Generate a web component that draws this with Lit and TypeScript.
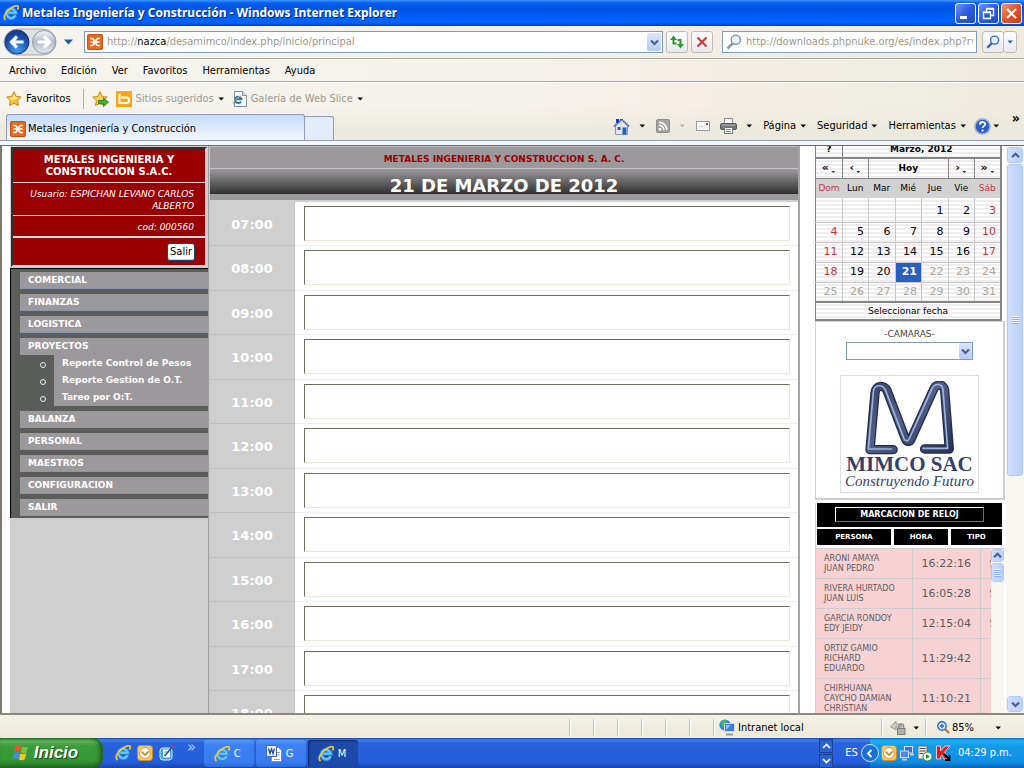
import { LitElement, html, svg, css } from "lit";
import { customElement } from "lit/decorators.js";
import { classMap } from "lit/directives/class-map.js";

const ieLogo = (size: number) => html`
  <svg class="ico" width=${size} height=${size} viewBox="0 0 16 16" aria-hidden="true">
    <path d="M12.600 10.400a4.800 4.800 0 1 1 .3-2.600H5.400" fill="none" stroke="#2f8fe0" stroke-width="3.600"/>
    <path d="M12.400 10.200a4.600 4.600 0 1 1 .3-2.500H5.400" fill="none" stroke="#6cc6fa" stroke-width="2"/>
    <path d="M2.500 15C-.8 12.600 3 6.400 7.600 3.200 11 .8 14.800-.2 15.300 1.600c.3 1-.3 2.200-.9 3" fill="none" stroke="#f9c62c" stroke-width="1.700"/>
  </svg>`;

const xampp = html`
  <svg class="ico" width="16" height="16" viewBox="0 0 16 16" aria-hidden="true">
    <rect width="16" height="16" rx="2" fill="#e8691d"/>
    <rect x=".5" y=".5" width="15" height="15" rx="2" fill="none" stroke="#c9530f"/>
    <path d="M3 4.500h2.500L7 6v4l-1.500 1.500H3M3.500 8H6M13 4.500h-2.500L9 6v4l1.500 1.500H13M12.500 8H10M6.500 8h3" fill="none" stroke="#fff" stroke-width="1.700"/>
  </svg>`;

const chevron = (up = false) => html`
  <svg class="ico" width="9" height="7" viewBox="0 0 9 7" aria-hidden="true">
    <path d=${up ? "M1 5.200 4.500 1.700 8 5.200" : "M1 1.500 4.500 5 8 1.500"} fill="none" stroke="#4d6185" stroke-width="2.200"/>
  </svg>`;

const tri = (color = "#000") => html`
  <svg class="ico" width="7" height="4" viewBox="0 0 7 4" aria-hidden="true"><path d="M.5.500h5.500L3.250 3.500z" fill=${color}/></svg>`;

const starPath = "M8 .8l2.200 4.600 5 .7-3.700 3.500.9 5L8 12.200l-4.500 2.400.9-5L.8 6.100l5-.7z";

const star = html`
  <svg class="ico" width="16" height="16" viewBox="0 0 16 16" aria-hidden="true">
    <path d=${starPath} fill="#fcc430" stroke="#c8861a"/>
    <path d="M8 3l1.300 3.200 3.500.4-3 1.500L5 9l-2-2.300 3.600-.5z" fill="#ffec8c"/>
  </svg>`;

const starAdd = html`
  <svg class="ico" width="17" height="16" viewBox="0 0 17 16" aria-hidden="true">
    <path d=${starPath} fill="#fcd049" stroke="#c8861a"/>
    <path d="M6.500 9.500h5V7l5 4.300-5 4.200v-2.700h-5z" fill="#3fb43a" stroke="#1d7a20" stroke-width=".8"/>
  </svg>`;

const bing = html`
  <svg class="ico" width="16" height="16" viewBox="0 0 16 16" aria-hidden="true">
    <rect width="16" height="16" fill="#fba51a"/>
    <path d="M3.500 3v9h7c3.400 0 3.400-5.500 0-5.500H5" fill="none" stroke="#fff" stroke-width="2"/>
  </svg>`;

const iePage = html`
  <svg class="ico" width="15" height="16" viewBox="0 0 15 16" aria-hidden="true">
    <path d="M2.500.5h8l4 4v11h-12z" fill="#fff" stroke="#7d8da5"/>
    <path d="M10.500.5v4h4" fill="#dde5f0" stroke="#7d8da5"/>
    <path d="M9 10.500a3.200 3.200 0 1 1 .4-2.200H4" fill="none" stroke="#1f7bd6" stroke-width="2"/>
    <path d="M1.500 13.500C0 11 6 5 9.500 5" fill="none" stroke="#f0b020"/>
  </svg>`;

const magnifier = (c: string, w = 16) => html`
  <svg class="ico" width=${w} height=${w} viewBox="0 0 16 16" aria-hidden="true">
    <path d="M1.500 14.500 7 9" stroke=${c} stroke-width="2.600"/>
    <circle cx="9.800" cy="5.800" r="4.600" fill="#eaf4fd" stroke=${c} stroke-width="1.500"/>
  </svg>`;

const home = html`
  <svg class="ico" width="17" height="17" viewBox="0 0 17 17" aria-hidden="true">
    <path d="M3 1h3v4H3z" fill="#1b35c4"/>
    <path d="M2.500 8 8.500 2l6 6v8.500h-12z" fill="#e2e7f0" stroke="#8a96aa"/>
    <path d="M.8 8.500 8.500 1l7.700 7.500" fill="none" stroke="#2743b8" stroke-width="1.500" stroke-dasharray="1.500 .7"/>
    <rect x="9.500" y="9.500" width="4" height="7" fill="#1e62c0"/>
    <rect x="4.500" y="9" width="3" height="3" fill="#556"/>
  </svg>`;

const rss = html`
  <svg class="ico" width="14" height="14" viewBox="0 0 14 14" aria-hidden="true">
    <rect width="14" height="14" rx="2" fill="#a5a5a2"/>
    <rect x=".5" y=".5" width="13" height="13" rx="2" fill="none" stroke="#8b8b88"/>
    <circle cx="4" cy="10.200" r="1.300" fill="#fff"/>
    <path d="M3 6.200a4.800 4.800 0 0 1 4.800 4.800M3 3.200A7.800 7.800 0 0 1 10.800 11" fill="none" stroke="#fff" stroke-width="1.400"/>
  </svg>`;

const mail = html`
  <svg class="ico" width="14" height="10" viewBox="0 0 14 10" aria-hidden="true">
    <rect x=".5" y=".5" width="13" height="9" fill="#f7f7fa" stroke="#9a9aa6"/>
    <path d="M3 5.500h4" stroke="#c8c8d2"/><rect x="10" y="2" width="2" height="2" fill="#e23c30"/>
  </svg>`;

const printer = html`
  <svg class="ico" width="17" height="16" viewBox="0 0 17 16" aria-hidden="true">
    <path d="M4.500.5h8v6h-8z" fill="#fff" stroke="#8c8c8c"/>
    <rect x=".5" y="5.500" width="16" height="6" rx="1.500" fill="#77797d" stroke="#55575b"/>
    <path d="M1.500 7h14" stroke="#b9bbbf"/>
    <path d="M4.500 9.500h8v6h-8z" fill="#fff" stroke="#6f7377"/>
    <path d="M6 11.500h5M6 13.500h5" stroke="#4a9bd8"/>
  </svg>`;

const help = html`
  <svg class="ico" width="17" height="17" viewBox="0 0 17 17" aria-hidden="true">
    <circle cx="8.500" cy="8.500" r="7.600" fill="#2d5fc4" stroke="#aab4c8" stroke-width="1.600"/>
    <path d="M5.800 6.600c.2-3.600 5.600-3.200 5.300-.2-.2 1.500-2.500 1.700-2.500 3.700" fill="none" stroke="#fff" stroke-width="1.800"/>
    <circle cx="8.600" cy="12.600" r="1.100" fill="#fff"/>
  </svg>`;

const navArrows = html`
  <svg class="nav-arrows" width="54" height="28" viewBox="0 0 54 28" aria-hidden="true">
    <defs>
      <radialGradient id="bk" cx=".5" cy=".85" r=".9"><stop offset="0" stop-color="#3d9cf0"/><stop offset=".6" stop-color="#1c4fae"/><stop offset="1" stop-color="#10357c"/></radialGradient>
      <linearGradient id="fw" x2="0" y2="1"><stop offset="0" stop-color="#f4f5f8"/><stop offset=".5" stop-color="#b3bcca"/><stop offset="1" stop-color="#e6e9ef"/></linearGradient>
    </defs>
    <path d="M14 1h26a13 13 0 0 1 0 26H14A13 13 0 0 1 14 1z" fill="#dfe0e2" stroke="#a9abb0"/>
    <circle cx="14" cy="14" r="12" fill="url(#bk)" stroke="#1b3568"/>
    <circle cx="41" cy="14" r="11.500" fill="url(#fw)" stroke="#8f98a8"/>
    <path d="M20.500 14H9M14 8.500 8.500 14l5.500 5.500" fill="none" stroke="#fff" stroke-width="3.200"/>
    <path d="M34.500 14H46M41 8.500l5.500 5.500-5.500 5.500" fill="none" stroke="#fff" stroke-width="3.200"/>
  </svg>`;

const refresh = html`
  <svg class="ico" width="16" height="16" viewBox="0 0 16 16" aria-hidden="true">
    <path d="M4.500 5v4.500h3M11.500 10.500V6h-3" fill="none" stroke="#2b9a2b" stroke-width="2"/>
    <path d="M1 6l3.500-4.500L8 6zM8 10h7l-3.500 4.500z" fill="#2b9a2b"/>
  </svg>`;

const stop = html`
  <svg class="ico" width="12" height="12" viewBox="0 0 12 12" aria-hidden="true">
    <path d="M1.500 1.500l9 9M10.500 1.500l-9 9" stroke="#cc3a3a" stroke-width="2.200"/></svg>`;

const flag = html`
  <svg class="ico" width="20" height="18" viewBox="0 0 20 18" aria-hidden="true">
    <path d="M4.500 2C6.500.8 8.500 1 10 2L8.600 8C7 7 5 7 3.200 8z" fill="#f0552a"/>
    <path d="M11 2.500c2 1 4 1 6-.2L15.500 8.300c-2 1.200-4 1-6 .2z" fill="#7cc242"/>
    <path d="M3 9c2-1.200 4-1 5.500 0L7 15.200C5.500 14 3.500 14 1.500 15z" fill="#3f8df0"/>
    <path d="M9.300 9.500c2 1 4 1 6-.2l-1.500 6c-2 1.200-4 1-6 .2z" fill="#fcc52c"/>
  </svg>`;

const outlook = html`
  <svg class="ico" width="16" height="16" viewBox="0 0 16 16" aria-hidden="true">
    <rect x=".5" y=".5" width="15" height="15" rx="3" fill="#f6c667" stroke="#c98c28"/>
    <circle cx="8" cy="8" r="5.500" fill="#fff8e6" stroke="#d99c3a"/>
    <path d="M4.500 6.500 8 10l4-3.800" fill="none" stroke="#b0792a" stroke-width="1.400"/>
  </svg>`;

const desktop = html`
  <svg class="ico" width="16" height="16" viewBox="0 0 16 16" aria-hidden="true">
    <rect x="1" y="3" width="12" height="12" rx="3" fill="#3da0ea" stroke="#d6ecff"/>
    <rect x="4" y="4.500" width="7" height="8" fill="#fff"/>
    <path d="M5.500 11 13 2.500" stroke="#1c4ea0" stroke-width="1.600"/>
    <path d="M12.500 1l2.500 2" stroke="#d03a2a" stroke-width="2"/>
    <path d="M5.500 7h3" stroke="#4a7fc8"/>
  </svg>`;

const word = html`
  <svg class="ico" width="16" height="17" viewBox="0 0 16 17" aria-hidden="true">
    <path d="M5.500 2.500h7l3 3v11h-10z" fill="#fff" stroke="#7b8fb5"/>
    <path d="M8 14.500h6M11 7.500h3M11 10h3" stroke="#8aa4d4"/>
    <rect x=".5" y=".5" width="10" height="11" fill="#e8effb" stroke="#4a68a8"/>
    <path d="M2.500 3.500l1.500 5 1.500-4.500 1.500 4.500 1.500-5" fill="none" stroke="#1f4fa8" stroke-width="1.300"/>
  </svg>`;

const globePc = html`
  <svg class="ico" width="16" height="17" viewBox="0 0 16 17" aria-hidden="true">
    <circle cx="6" cy="6" r="5.600" fill="#2f87d8"/><path d="M2 3c2-2 4-2 6-1L6 6 3 8zM5 9l3 0 0 2z" fill="#4cbf3c"/>
    <rect x="5.500" y="4.500" width="10" height="8" rx="1" fill="#3c7be0" stroke="#d2dcea"/>
    <path d="M7 11V6h5z" fill="#8cc6f8"/><path d="M7 15.500h7" stroke="#8d97a8" stroke-width="2"/>
  </svg>`;

const protectedMode = html`
  <svg class="ico" width="16" height="15" viewBox="0 0 16 15" aria-hidden="true">
    <path d="M.5 7 6 1v3c4-.5 6 1 6 3H6v3z" fill="#c9c9c4" stroke="#9a9a94"/>
    <path d="M9 8.500V6.300a2.300 2.300 0 0 1 4.600 0v2.200" fill="none" stroke="#8c8c8c" stroke-width="1.400"/>
    <rect x="7.500" y="8.500" width="7.500" height="6" fill="#b0b0ac" stroke="#7e7e7c"/>
  </svg>`;

const zoomIn = html`
  <svg class="ico" width="13" height="13" viewBox="0 0 13 13" aria-hidden="true">
    <path d="M8 8l4 4" stroke="#b3793a" stroke-width="2.200"/>
    <circle cx="5" cy="5" r="4.200" fill="#dff0ff" stroke="#2a68c8" stroke-width="1.400"/>
    <path d="M2.800 5h4.400M5 2.800v4.400" stroke="#2a68c8" stroke-width="1.400"/>
  </svg>`;

const network = html`
  <svg class="ico" width="16" height="16" viewBox="0 0 16 16" aria-hidden="true">
    <rect x="5.500" y="1.500" width="8" height="6.500" fill="#3f6cd8" stroke="#cfe0f5"/>
    <rect x="1.500" y="6" width="8" height="6.500" fill="#4f86e8" stroke="#cfe0f5"/>
    <path d="M3 14.500h5M11 9.500h4" stroke="#c0cbdc" stroke-width="2"/>
  </svg>`;

const server = html`
  <svg class="ico" width="16" height="17" viewBox="0 0 16 17" aria-hidden="true">
    <rect x="1" y="1" width="9" height="13" fill="#e8e6da" stroke="#77756a"/>
    <path d="M2.500 3.500h6M2.500 6h6M2.500 8.500h4" stroke="#555"/>
    <circle cx="10.500" cy="11.500" r="4.500" fill="#fff" stroke="#2d8c2d"/>
    <path d="M9 9v5l4-2.500z" fill="#1f9a1f"/>
  </svg>`;

const kaspersky = html`
  <svg class="ico" width="16" height="16" viewBox="0 0 16 16" aria-hidden="true">
    <path d="M1.500 1h4v5L10 1h5L9.500 7l4 7H9L7 10l-1.500 1.500V14h-4z" fill="#e31b1b" stroke="#fff" stroke-width=".7"/>
    <path d="M9 9l5.500 5.500M14.500 10v5H10" fill="none" stroke="#000" stroke-width="1.800"/>
  </svg>`;

const pipe = "M340 388H271L286 218C288 194 314 194 322 212L377 356C381 366 390 366 394 356L461 208C469 190 492 192 494 210L508 386H434";
const mimcoLogo = html`
  <svg class="m-logo" width="91" height="74" viewBox="253 183 272 221" preserveAspectRatio="none" aria-hidden="true">
    <defs>
      <linearGradient id="steel" x2="1" y2="1"><stop offset="0" stop-color="#39456b"/><stop offset=".45" stop-color="#52618c"/><stop offset="1" stop-color="#2a3458"/></linearGradient>
    </defs>
    ${svg`<path d=${pipe} fill="none" stroke="#262c42" stroke-width="28" stroke-linejoin="round" stroke-linecap="round"/>
    <path d=${pipe} fill="none" stroke="url(#steel)" stroke-width="20" stroke-linejoin="round" stroke-linecap="round"/>
    <path d=${pipe} transform="translate(-5 -2)" fill="none" stroke="#9fb4dc" stroke-width="5" stroke-linejoin="round" stroke-linecap="round"/>`}
  </svg>`;

const HOURS = Array.from({ length: 12 }, (_, i) => `${String(i + 7).padStart(2, "0")}:00`);
const MENU: { name: string; items?: string[] }[] = [
  { name: "COMERCIAL" }, { name: "FINANZAS" }, { name: "LOGISTICA" },
  { name: "PROYECTOS", items: ["Reporte Control de Pesos", "Reporte Gestion de O.T.", "Tareo por O:T."] },
  { name: "BALANZA" }, { name: "PERSONAL" }, { name: "MAESTROS" }, { name: "CONFIGURACION" }, { name: "SALIR" },
];
const DAYS = ["Dom", "Lun", "Mar", "Mié", "Jue", "Vie", "Sáb"];
const FIRST_WEEKDAY = 4;
const TODAY = 21;
const CLOCK = [
  { who: ["ARONI AMAYA", "JUAN PEDRO"], at: "16:22:16", kind: "S" },
  { who: ["RIVERA HURTADO", "JUAN LUIS"], at: "16:05:28", kind: "S" },
  { who: ["GARCIA RONDOY", "EDY JEIDY"], at: "12:15:04", kind: "S" },
  { who: ["ORTIZ GAMIO", "RICHARD", "EDUARDO"], at: "11:29:42", kind: "" },
  { who: ["CHIRHUANA", "CAYCHO DAMIAN", "CHRISTIAN"], at: "11:10:21", kind: "" },
];

@customElement("app-root")
export class AppRoot extends LitElement {
  static styles = css`
    :host {
      display: flex; flex-direction: column; height: 100vh; overflow: hidden;
      font: 11px/14px "DejaVu Sans Condensed", "DejaVu Sans", sans-serif; color: #000; background: #fff;
    }
    *, *::before { box-sizing: border-box; }
    button, input, select { font: inherit; color: inherit; margin: 0; padding: 0; border: 0; background: none; border-radius: 0; outline: 0; }
    button { display: flex; align-items: center; justify-content: center; white-space: nowrap; }
    a { color: inherit; text-decoration: none; white-space: nowrap; }
    ul { list-style: none; margin: 0; padding: 0; }
    .ico { display: block; flex: none; }
    .grow { flex: 1; min-width: 0; }

    .title {
      flex: none; height: 26px; display: flex; align-items: center; gap: 3px; padding: 0 2px 0 3px; color: #fff;
      background: linear-gradient(#3d95ff 0, #0a5ef0 3px, #0054e3 8px, #0058ee 14px, #0066ff 21px, #0060f8 23px, #003dc0 26px);
    }
    .title h1 { margin: 0; font: bold 12px/16px "Noto Sans", "Open Sans", sans-serif; text-shadow: 1px 1px 0 #0a2a80; white-space: nowrap; overflow: hidden; }
    .win { width: 21px; height: 21px; flex: none; border: 1px solid #fff; border-radius: 3px; background: linear-gradient(135deg, #6f97f0, #2a5bdc 50%, #1e4bc8); }
    .win.close { background: linear-gradient(135deg, #f0977c, #e0532c 50%, #c83c14); }
    .wins { display: flex; gap: 2px; }

    .chrome { flex: none; background: linear-gradient(90deg, #f6f4ee 0, #f5f2ec 50%, #f5ede6 68%, #f0eee2 85%, #efebde 100%); }
    .nav { height: 33px; display: flex; align-items: center; gap: 3px; padding: 0 7px 0 3px; border-bottom: 1px solid #aca899; }
    .nav-arrows { display: block; flex: none; }
    .hist { width: 16px; height: 20px; }
    .addr { flex: 1; min-width: 0; height: 22px; margin-left: 5px; display: flex; align-items: center; gap: 4px; padding: 0 1px; border: 1px solid #7f9db9; background: #fff; color: #9a978a; }
    .addr .dark { color: #000; }
    .addr .ico:first-child { margin-left: 1px; }
    .drop { width: 14px; height: 18px; flex: none; border-radius: 2px; background: linear-gradient(#dbe6fe, #b4cafa); }
    .tool { width: 22px; height: 22px; flex: none; border: 1px solid #bcbcb6; border-radius: 3px; background: linear-gradient(#fff, #e9e8ec); }
    .find { width: 255px; flex: none; height: 22px; margin-left: 6px; display: flex; align-items: center; gap: 4px; padding: 0 3px; border: 1px solid #7f9db9; background: #fff; color: #9a978a; }
    .find input { flex: 1; min-width: 0; }
    .go { display: flex; margin-left: 2px; }
    .go .tool + .tool { width: 14px; margin-left: -1px; }
    .menu { height: 23px; display: flex; align-items: center; gap: 15px; padding: 0 9px; border-bottom: 1px solid #aca899; border-top: 1px solid #fff; }
    .favs { height: 26px; display: flex; align-items: center; gap: 7px; padding: 6px 6px 0; border-top: 1px solid #fff; color: #9c998c; }
    .favs a { display: flex; align-items: center; gap: 4px; }
    .favs .main { color: #000; padding-right: 12px; margin-right: 1px; border-right: 1px solid #b5b2a5; height: 20px; }
    .tabs { height: 33px; display: flex; align-items: flex-end; padding-left: 6px; border-bottom: 1px solid #8f9bb8; background: linear-gradient(rgba(232, 234, 216, 0), #eceadc 70%); }
    .tab { width: 299px; height: 26px; display: flex; align-items: center; gap: 2px; padding: 2px 3px 0; border: 1px solid #8f9bb8; border-bottom: 0; border-radius: 3px 3px 0 0; background: linear-gradient(#c3dbfc, #f3f6fe); }
    .newtab { width: 29px; height: 24px; border: 1px solid #8f9bb8; border-left: 0; border-bottom: 0; border-radius: 0 3px 0 0; background: #e4ebfb; }
    .cmds { margin-left: auto; display: flex; align-items: center; gap: 10px; height: 28px; padding: 0 4px 0 0; }
    .cmds button { gap: 4px; }
    .cmds .pair { gap: 9px; }
    .cmds .tight { gap: 2px; margin-left: -3px; }
    .cmds .more { align-self: flex-start; font: bold 14px/12px "DejaVu Sans Condensed", "DejaVu Sans", sans-serif; margin-left: 2px; }
    .strip { height: 5px; background: #f5f7ff; border-bottom: 1px solid #6f6a60; }

    .page { flex: 1; min-height: 0; display: flex; border-left: 2px solid #7d786c; padding-left: 8px; overflow: hidden; background: #fff; font-family: "DejaVu Sans", sans-serif; }
    .side { width: 199px; flex: none; background: #cfcfcf; border-right: 1px solid #a0a0a0; overflow: hidden; }
    .user { margin: 1px; border: 2px solid #303030; border-color: #303030 #d0d0d0 #d0d0d0 #303030; background: #990000; color: #fff; font-size: 9px; line-height: 12px; }
    .user > * { margin: 0; border: 0 solid #d8d8d8; border-bottom-width: 1px; }
    .user h2 { font-size: 10px; line-height: 12px; text-align: center; padding: 5px 20px 4px; }
    .user p { font-style: italic; text-align: right; padding: 5px 11px 3px; }
    .user p + p { border-bottom-width: 2px; }
    .user div { display: flex; justify-content: flex-end; padding: 5px 10px 4px; border: 0; }
    .exit { height: 18px; width: 28px; color: #000; background: #fff; border: 1px solid #1a4275; border-radius: 3px; box-shadow: inset 0 -1px #d6d0c5; font: 11px/12px "DejaVu Sans Condensed", "DejaVu Sans", sans-serif; }
    .sections { background: #5b5d5a; border-left: 1px solid #000; border-top: 1px solid #000; padding: 3px 0 2px 9px; color: #fff; font-size: 9px; font-weight: bold; display: flex; flex-direction: column; gap: 5px; }
    .sections a { display: block; line-height: 17px; padding-left: 8px; background: #9c999c; }
    .sections .last { border-bottom: 1px solid #8a97ab; line-height: 16px; }
    .sub a { margin-left: 34px; }
    .sub li { position: relative; }
    .sub li::before { content: ""; position: absolute; left: 20px; top: 7px; width: 6px; height: 6px; border: 1px solid #e4f0f8; border-radius: 50%; }

    .agenda { flex: 1; min-width: 0; overflow: hidden; border-right: 2px solid #a5a5a5; border-left: 1px solid #c8c8c8; }
    .org { height: 23px; display: flex; align-items: center; justify-content: center; padding-top: 2px; background: #9c999c; border-top: 1px solid #c0c0c0; border-bottom: 1px solid #c4c4c4; color: #990000; font: bold 9px/12px "DejaVu Sans", sans-serif; }
    .date { margin: 0; height: 33px; text-align: center; color: #fff; font: bold 18px/33px "DejaVu Sans", sans-serif; background: linear-gradient(#9c999c 0, #8c8a8c 4px, #303030 25px, #9c999c 25px, #9c999c 31px, #d0d0d0 31px); }
    .slot { display: grid; grid-template-columns: 85px 1fr; height: 44px; }
    .slot:nth-child(even) { height: 45px; }
    .slot label { display: flex; align-items: center; justify-content: center; padding-top: 2px; background: #cfcfcf; color: #fff; font: bold 13px/16px "DejaVu Sans", sans-serif; border-bottom: 1px solid #bfbfbf; border-right: 1px solid #c6c6c6; }
    .cell { padding: 4px 8px 0 9px; border-bottom: 1px solid #f0eeee; }
    .cell input { display: block; width: 100%; height: 35px; border: 1px solid #ece9d8; border-top-color: #716c62; border-left-color: #716c62; background: #fff; }

    .right { width: 206px; flex: none; padding-left: 15px; overflow: hidden; }
    table { border-collapse: collapse; table-layout: fixed; width: 100%; }
    td, th { padding: 0; font-weight: normal; }
    .cal { width: 187px; border: 2px solid #868686; border-top: 0; border-left-width: 1px; font-size: 11px; line-height: 14px; background: repeating-linear-gradient(#fff 0, #fff 2px, #f0edf0 2px, #f0edf0 4px); }
    .cal .t { font-size: 9px; font-weight: bold; height: 11px; line-height: 7px; border-bottom: 2px solid #868686; border-right: 1px solid #868686; text-align: center; padding-bottom: 4px; }
    .cal .n { font-size: 9px; font-weight: bold; height: 20px; border: 1px solid #868686; border-width: 0 1px 1px 0; text-align: center; }
    .cal .n button { width: 100%; font-size: 11px; font-weight: bold; line-height: 16px; gap: 2px; }
    .cal .n button .ico { margin-top: 8px; width: 5px; }
    .cal .h { font-size: 9px; height: 20px; text-align: center; background: #d2d2d2; }
    .cal .d { height: 20px; text-align: right; padding-right: 4px; border-right: 1px solid #c8c8c8; border-bottom: 1px solid #c8c8c8; }
    .cal .first .d { height: 24px; padding-top: 2px; }
    .cal .red { color: #cc3340; }
    .cal .off { color: #aaa79c; }
    .cal .now { background: #2a5fc0; color: #fff; font-weight: bold; }
    .cal .f { font-size: 9px; height: 18px; text-align: center; border-top: 2px solid #868686; }
    .box { width: 190px; border: 2px solid #cfcfcf; border-width: 1px 2px 2px 1px; display: flex; flex-direction: column; align-items: center; height: 179px; padding-top: 6px; }
    .box label { font-size: 9px; line-height: 13px; color: #444; }
    .combo { position: relative; width: 127px; height: 18px; margin-top: 1px; }
    .combo select { appearance: none; width: 100%; height: 100%; border: 1px solid #7f9db9; background: #fff; }
    .combo .drop { position: absolute; right: 1px; top: 1px; width: 13px; height: 16px; display: flex; align-items: center; justify-content: center; pointer-events: none; }
    .logo { width: 139px; margin-top: 15px; height: 118px; border: 1px solid #e0dcdc; display: flex; flex-direction: column; align-items: center; padding-top: 5px; color: #343f6c; white-space: nowrap; }
    .m-logo { display: block; flex: none; }
    .logo b { font: bold 21px/18px "Liberation Serif", serif; }
    .logo i { font: italic 15px/17px "Liberation Serif", serif; }
    .clock { width: 189px; margin-top: 3px; border-left: 1px solid #cfcfcf; }
    .clock h3 { margin: 0 2px 2px 1px; height: 24px; padding: 4px 18px; background: #000; color: #fff; font-size: 8px; }
    .clock h3 span { display: block; line-height: 13px; border: 1px solid #fff; border-color: #fff #716c62 #716c62 #fff; text-align: center; }
    .heads { display: grid; grid-template-columns: 74px 54px 1fr; gap: 3px; padding: 0 2px 3px 1px; color: #fff; font: bold 7px/16px "DejaVu Sans", sans-serif; text-align: center; }
    .heads span { background: #000; }
    .list { display: flex; height: 168px; overflow: hidden; border-top: 1px solid #cfcfcf; }
    .clip { flex: 1; min-width: 0; overflow: hidden; }
    .clip table { width: 212px; background: #f6d2d4; color: #5e5a5c; font-size: 8px; line-height: 10px; }
    .clip td { padding: 5px 0 4px 8px; height: 29px; border-right: 1px solid #cfcacb; border-bottom: 1px solid #cfcacb; }
    .clip .at { font-size: 11px; padding: 0 0 0 9px; }
    .clip .kind { font-size: 11px; padding: 0 0 0 9px; }

    .bar { width: 18px; flex: none; display: flex; flex-direction: column; gap: 1px; padding: 1px; background: #f8f6f0; }
    .bar button, .bar .thumb { border: 1px solid #fff; outline: 1px solid #b4c8f4; outline-offset: -1px; border-radius: 3px; background: linear-gradient(90deg, #cfdefe, #b9cffb); }
    .bar button { height: 16px; flex: none; width: 100%; }
    .thumb { display: flex; align-items: center; justify-content: center; }
    .big { height: 312px; flex: none; }
    .mini { width: 13px; padding: 0; }
    .mini button { height: 13px; }
    .mini .thumb { height: 19px; flex: none; }
    .grip { width: 7px; height: 8px; background: repeating-linear-gradient(#eef4fe 0, #eef4fe 1px, #8cb0f8 1px, #8cb0f8 2px); }

    .status { flex: none; height: 25px; display: flex; align-items: center; padding: 2px 0 0; border-top: 2px solid #8d887a; background: linear-gradient(#f4f2e8, #ece9d8); }
    .pane { width: 24px; height: 17px; border-left: 1px solid #c5c2b2; box-shadow: inset 1px 0 #fff; display: flex; align-items: center; gap: 4px; white-space: nowrap; flex: none; }
    .zone { width: 168px; padding-left: 5px; gap: 3px; }
    .prot { width: 44px; padding-left: 8px; gap: 7px; }
    .zoomp { width: 99px; padding: 0 22px 0 11px; gap: 2px; }

    .task { flex: none; height: 30px; display: flex; align-items: stretch; color: #fff; background: linear-gradient(#1941a5 0, #3d80f0 2px, #2a62dc 5px, #245edb 24px, #1a45a8 30px); }
    .start { width: 103px; gap: 3px; padding-right: 14px; border-radius: 0 10px 10px 0; background: linear-gradient(#2f7a2f 0, #62b862 3px, #3c9a3c 8px, #369836 22px, #256d25 30px); box-shadow: inset -3px 0 4px #1d5c1d; font: italic bold 17px/20px "Liberation Sans", sans-serif; text-shadow: 1px 1px 1px #163f16; }
    .quick { display: flex; align-items: center; gap: 6px; padding: 0 8px 0 12px; }
    .quick span { align-self: flex-start; margin-left: 6px; font-size: 16px; line-height: 18px; color: #a8c8fa; }
    .apps { display: flex; gap: 2px; padding: 2px 0 1px; }
    .app { width: 50px; justify-content: flex-start; gap: 4px; padding-left: 10px; border-radius: 3px; background: linear-gradient(#5a9afa, #3c80f4 5px, #3a7cf0 22px, #2f68d8); }
    .app.on { background: #1c4aa8; box-shadow: inset 1px 1px 2px #0c2a6c; }
    .updown { width: 14px; display: flex; flex-direction: column; gap: 1px; padding-top: 1px; }
    .updown button { height: 14px; border: 1px solid #1a3f9c; background: #2c62cc; }
    .lang { width: 37px; display: flex; align-items: center; justify-content: center; }
    .tray { width: 154px; display: flex; align-items: center; gap: 2px; white-space: nowrap; background: linear-gradient(#0f6fc8 0, #1cb0f4 3px, #139ae8 8px, #128fe4 24px, #0d62b4 30px); }
    .tray time { margin-left: 5px; }
    .hide { width: 18px; height: 18px; margin-left: -9px; border-radius: 50%; border: 1px solid #cfe6fc; background: #1c6ed8; }
  `;

  private chromeBars() {
    return html`
      <header class="title">
        ${ieLogo(16)}<h1>Metales Ingeniería y Construcción - Windows Internet Explorer</h1><span class="grow"></span>
        <div class="wins">
          <button class="win" aria-label="Minimizar"><svg width="17" height="17" viewBox="0 0 17 17"><path d="M3 12.500h7" stroke="#fff" stroke-width="3"/></svg></button>
          <button class="win" aria-label="Restaurar"><svg width="17" height="17" viewBox="0 0 17 17"><path d="M6.500 6V3.500h7v7H11M6 4h8M3.500 7h7v6.500h-7zM3 7.500h8" fill="none" stroke="#fff" stroke-width="1.300"/></svg></button>
          <button class="win close" aria-label="Cerrar"><svg width="17" height="17" viewBox="0 0 17 17"><path d="M4 4l9 9M13 4l-9 9" stroke="#fff" stroke-width="2.200"/></svg></button>
        </div>
      </header>
      <div class="chrome">
        <div class="nav">
          ${navArrows}
          <button class="hist" aria-label="Historial"><svg width="9" height="6" viewBox="0 0 9 6"><path d="M0 .5h9L4.500 5.500z" fill="#1c5ca8"/></svg></button>
          <div class="addr">${xampp}<span class="grow">http://<span class="dark">nazca</span>/desamimco/index.php/inicio/principal</span>
            <button class="drop" aria-label="Direcciones">${chevron()}</button></div>
          <button class="tool" aria-label="Actualizar">${refresh}</button>
          <button class="tool" aria-label="Detener">${stop}</button>
          <div class="find">${magnifier("#8b98a8")}<input aria-label="Buscar" value="http://downloads.phpnuke.org/es/index.php?rvs=hackmatrix"></div>
          <div class="go"><button class="tool" aria-label="Ir">${magnifier("#2a62d0", 14)}</button><button class="tool" aria-label="Opciones">${tri("#1c5cb8")}</button></div>
        </div>
        <nav class="menu">${["Archivo", "Edición", "Ver", "Favoritos", "Herramientas", "Ayuda"].map((m) => html`<a href="#">${m}</a>`)}</nav>
        <div class="favs">
          <a class="main" href="#">${star}Favoritos</a>
          <a href="#" aria-label="Agregar">${starAdd}</a>
          <a href="#">${bing}Sitios sugeridos ${tri()}</a>
          <a href="#">${iePage}Galería de Web Slice ${tri()}</a>
        </div>
        <div class="tabs">
          <a class="tab" href="#">${xampp}Metales Ingeniería y Construcción</a><button class="newtab" aria-label="Nueva ficha"></button>
          <div class="cmds">
            <button class="pair" aria-label="Inicio">${home}${tri()}</button>
            <button class="pair" aria-label="Fuentes">${rss}${tri("#c0bdb0")}</button>
            <button aria-label="Correo">${mail}</button>
            <button class="pair" aria-label="Imprimir">${printer}${tri()}</button>
            <button>Página ${tri()}</button>
            <button>Seguridad ${tri()}</button>
            <button>Herramientas ${tri()}</button>
            <button class="tight" aria-label="Ayuda">${help}${tri()}</button>
            <button class="more">»</button>
          </div>
        </div>
        <div class="strip"></div>
      </div>`;
  }

  private sidebar() {
    return html`
      <aside class="side">
        <div class="user">
          <h2>METALES INGENIERIA Y CONSTRUCCION S.A.C.</h2>
          <p>Usuario: ESPICHAN LEVANO CARLOS ALBERTO</p>
          <p>cod: 000560</p>
          <div><button class="exit">Salir</button></div>
        </div>
        <ul class="sections">
          ${MENU.map((s) => html`<li>
            <a class=${classMap({ last: !s.items })} href="#">${s.name}</a>
            ${s.items ? html`<ul class="sub">${s.items.map((t) => html`<li><a href="#">${t}</a></li>`)}</ul>` : ""}
          </li>`)}
        </ul>
      </aside>`;
  }

  private calendar() {
    const weeks = Array.from({ length: 5 }, (_, w) => Array.from({ length: 7 }, (_, d) => w * 7 + d - FIRST_WEEKDAY + 1));
    const nav = (s: string) => html`<button>${s}${tri("#333")}</button>`;
    return html`
      <table class="cal">
        <thead>
          <tr><th class="t">?</th><th class="t" colspan="6">Marzo, 2012</th></tr>
          <tr><td class="n">${nav("«")}</td><td class="n">${nav("‹")}</td><td class="n" colspan="3">Hoy</td><td class="n">${nav("›")}</td><td class="n">${nav("»")}</td></tr>
          <tr>${DAYS.map((d, i) => html`<th class=${classMap({ h: true, red: i % 6 === 0 })}>${d}</th>`)}</tr>
        </thead>
        <tbody>
          ${weeks.map((w, wi) => html`<tr class=${wi === 0 ? "first" : ""}>${w.map((n, i) => html`
            <td class=${classMap({ d: true, red: i % 6 === 0 && n < TODAY, off: n > TODAY, now: n === TODAY })}>${n > 0 ? n : ""}</td>`)}</tr>`)}
        </tbody>
        <tfoot><tr><td class="f" colspan="7">Seleccionar fecha</td></tr></tfoot>
      </table>`;
  }

  private rightColumn() {
    return html`
      <section class="right">
        ${this.calendar()}
        <div class="box">
          <label for="cam">-CAMARAS-</label>
          <div class="combo"><select id="cam"><option></option></select><span class="drop">${chevron()}</span></div>
          <div class="logo">${mimcoLogo}<b>MIMCO SAC</b><i>Construyendo Futuro</i></div>
        </div>
        <div class="clock">
          <h3><span>MARCACION DE RELOJ</span></h3>
          <div class="heads"><span>PERSONA</span><span>HORA</span><span>TIPO</span></div>
          <div class="list">
            <div class="clip"><table>
              <colgroup><col width="96"><col width="68"><col width="48"></colgroup>
              ${CLOCK.map((r) => html`<tr><td>${r.who.map((l, i) => html`${i ? html`<br>` : ""}${l}`)}</td><td class="at">${r.at}</td><td class="kind">${r.kind}</td></tr>`)}
            </table></div>
            <div class="bar mini"><button aria-label="Subir lista">${chevron(true)}</button><div class="thumb"><span class="grip"></span></div></div>
          </div>
        </div>
      </section>`;
  }

  render() {
    return html`
      ${this.chromeBars()}
      <main class="page">
        ${this.sidebar()}
        <section class="agenda">
          <div class="org">METALES INGENIERIA Y CONSTRUCCION S. A. C.</div>
          <h2 class="date">21 DE MARZO DE 2012</h2>
          <div>${HOURS.map((h, i) => html`<div class="slot"><label for="h${i}">${h}</label><div class="cell"><input id="h${i}" type="text"></div></div>`)}</div>
        </section>
        ${this.rightColumn()}
        <div class="bar"><button aria-label="Subir">${chevron(true)}</button><div class="thumb big"><span class="grip"></span></div><span class="grow"></span><button aria-label="Bajar">${chevron()}</button></div>
      </main>
      <footer class="status">
        <span class="grow"></span>
        ${[0, 1, 2, 3, 4, 5].map(() => html`<span class="pane"></span>`)}
        <span class="pane zone">${globePc}Intranet local</span>
        <span class="pane prot">${protectedMode}${tri()}</span>
        <span class="pane zoomp">${zoomIn}85%<span class="grow"></span>${tri()}</span>
      </footer>
      <div class="task">
        <button class="start">${flag}Inicio</button>
        <div class="quick">${ieLogo(16)}${outlook}${desktop}<span>»</span></div>
        <div class="apps">
          <button class="app">${ieLogo(16)}C</button><button class="app">${word}G</button><button class="app on">${ieLogo(16)}M</button>
        </div>
        <span class="grow"></span>
        <div class="updown">
          <button aria-label="Anterior"><svg width="9" height="6" viewBox="0 0 9 6"><path d="M1 5 4.500 1.500 8 5" fill="none" stroke="#fff" stroke-width="1.600"/></svg></button>
          <button aria-label="Siguiente"><svg width="9" height="6" viewBox="0 0 9 6"><path d="M1 1 4.500 4.500 8 1" fill="none" stroke="#fff" stroke-width="1.600"/></svg></button>
        </div>
        <span class="lang">ES</span>
        <div class="tray">
          <button class="hide" aria-label="Ocultar"><svg width="8" height="9" viewBox="0 0 8 9"><path d="M5.500 1 2 4.500 5.500 8" fill="none" stroke="#fff" stroke-width="1.800"/></svg></button>
          ${outlook}${network}${server}${kaspersky}<time>04:29 p.m.</time>
        </div>
      </div>`;
  }
}
